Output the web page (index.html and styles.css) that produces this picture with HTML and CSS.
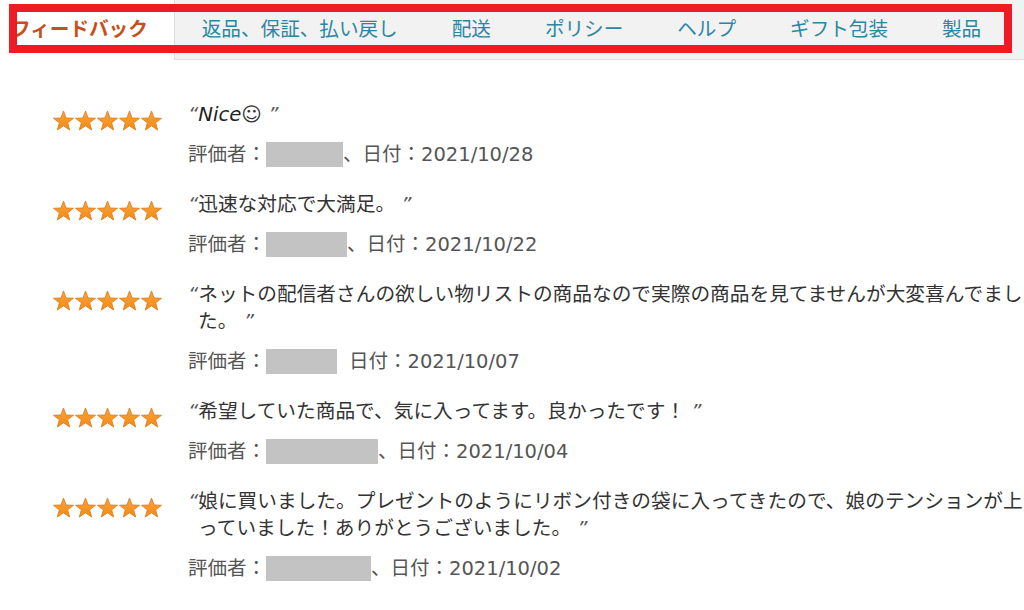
FILE: index.html
```html
<!DOCTYPE html>
<html lang="ja">
<head>
    <meta charset="UTF-8">
    <title>フィードバック</title>
    <link rel="stylesheet" href="styles.css">
</head>
<body>
    <svg class="defs" width="0" height="0">
        <defs>
            <linearGradient id="starFill" x1="0" y1="0" x2="0" y2="1">
                <stop offset="0" stop-color="#fca43c"/>
                <stop offset="1" stop-color="#f28a14"/>
            </linearGradient>
            <symbol id="star" viewBox="0 0 22 22">
                <polygon points="11,1 13.5,8 21,8.3 15.1,12.8 17.2,20 11,15.8 4.8,20 6.9,12.8 1,8.3 8.5,8" fill="url(#starFill)" stroke="#e07d1c" stroke-width="0.9" stroke-linejoin="round"/>
            </symbol>
        </defs>
    </svg>

    <nav class="tabs">
        <ul class="tab-list">
            <li class="tab active">フィードバック</li>
            <li class="tab">返品、保証、払い戻し</li>
            <li class="tab">配送</li>
            <li class="tab">ポリシー</li>
            <li class="tab">ヘルプ</li>
            <li class="tab">ギフト包装</li>
            <li class="tab">製品</li>
        </ul>
        <div class="highlight"></div>
    </nav>

    <main class="reviews">
        <div class="review">
            <svg class="stars" viewBox="0 0 110 22"><use href="#star" x="0" width="22" height="22"/><use href="#star" x="22" width="22" height="22"/><use href="#star" x="44" width="22" height="22"/><use href="#star" x="66" width="22" height="22"/><use href="#star" x="88" width="22" height="22"/></svg>
            <div class="body">
                <p class="quote"><span class="q">“</span><em>Nice</em>☺<span class="q"> ”</span></p>
                <p class="meta">評価者：<span class="mask" style="width:77px"></span>、日付：2021/10/28</p>
            </div>
        </div>
        <div class="review">
            <svg class="stars" viewBox="0 0 110 22"><use href="#star" x="0" width="22" height="22"/><use href="#star" x="22" width="22" height="22"/><use href="#star" x="44" width="22" height="22"/><use href="#star" x="66" width="22" height="22"/><use href="#star" x="88" width="22" height="22"/></svg>
            <div class="body">
                <p class="quote"><span class="q">“</span>迅速な対応で大満足。<span class="q"> ”</span></p>
                <p class="meta">評価者：<span class="mask" style="width:81px"></span>、日付：2021/10/22</p>
            </div>
        </div>
        <div class="review">
            <svg class="stars" viewBox="0 0 110 22"><use href="#star" x="0" width="22" height="22"/><use href="#star" x="22" width="22" height="22"/><use href="#star" x="44" width="22" height="22"/><use href="#star" x="66" width="22" height="22"/><use href="#star" x="88" width="22" height="22"/></svg>
            <div class="body">
                <p class="quote"><span class="q">“</span>ネットの配信者さんの欲しい物リストの商品なので実際の商品を見てませんが大変喜んでました。<span class="q"> ”</span></p>
                <p class="meta">評価者：<span class="mask gap" style="width:71px"></span>日付：2021/10/07</p>
            </div>
        </div>
        <div class="review">
            <svg class="stars" viewBox="0 0 110 22"><use href="#star" x="0" width="22" height="22"/><use href="#star" x="22" width="22" height="22"/><use href="#star" x="44" width="22" height="22"/><use href="#star" x="66" width="22" height="22"/><use href="#star" x="88" width="22" height="22"/></svg>
            <div class="body">
                <p class="quote"><span class="q">“</span>希望していた商品で、気に入ってます。良かったです！<span class="q"> ”</span></p>
                <p class="meta">評価者：<span class="mask" style="width:112px"></span>、日付：2021/10/04</p>
            </div>
        </div>
        <div class="review">
            <svg class="stars" viewBox="0 0 110 22"><use href="#star" x="0" width="22" height="22"/><use href="#star" x="22" width="22" height="22"/><use href="#star" x="44" width="22" height="22"/><use href="#star" x="66" width="22" height="22"/><use href="#star" x="88" width="22" height="22"/></svg>
            <div class="body">
                <p class="quote"><span class="q">“</span>娘に買いました。プレゼントのようにリボン付きの袋に入ってきたので、娘のテンションが上っていました！ありがとうございました。<span class="q"> ”</span></p>
                <p class="meta">評価者：<span class="mask" style="width:105px"></span>、日付：2021/10/02</p>
            </div>
        </div>
    </main>
</body>
</html>
```

FILE: styles.css
```css
html, body {
    overflow: hidden;
}

body {
    margin: 0;
    width: 1024px;
    height: 610px;
    background: #ffffff;
    font-family: "DejaVu Sans", "Noto Sans CJK JP", sans-serif;
}

.defs {
    position: absolute;
    width: 0;
    height: 0;
}

/* tab bar */

.tabs {
    position: relative;
    height: 60px;
}

.tab-list {
    display: flex;
    margin: 0 0 0 -15px;
    padding: 0;
    list-style: none;
    height: 59px;
    background: #f2f2f2;
    border-bottom: 1px solid #dddddd;
}

.tab {
    padding: 0 27px;
    font-size: 19.6px;
    line-height: 59px;
    color: #2a87a3;
    white-space: nowrap;
}

.tab.active {
    height: 60px;
    padding: 0 26px;
    background: #ffffff;
    border-right: 1px solid #dddddd;
    color: #c4501b;
    font-weight: bold;
}

.highlight {
    position: absolute;
    left: 9px;
    top: 4px;
    width: 1003px;
    height: 49px;
    box-sizing: border-box;
    border: 8px solid #ed1c24;
}

/* reviews */

.reviews {
    padding: 41px 0 0 52px;
}

.review {
    display: flex;
    margin-bottom: 23px;
}

.stars {
    flex: none;
    width: 111px;
    height: 22px;
    margin: 9px 25px 0 0;
}

.body {
    flex: none;
    width: 845px;
}

.quote {
    margin: 0 0 13px;
    padding-left: 10px;
    text-indent: -10px;
    font-size: 19.7px;
    line-height: 27px;
    color: #333333;
    line-break: loose;
}

.quote em {
    font-style: italic;
    color: #222222;
}

.q {
    font-style: italic;
    color: #555555;
}

.meta {
    margin: 0;
    font-size: 19.5px;
    line-height: 27px;
    color: #555555;
}

.mask {
    display: inline-block;
    height: 25px;
    background: #c3c3c3;
    vertical-align: -6px;
}

.mask.gap {
    margin-right: 12px;
}
```
